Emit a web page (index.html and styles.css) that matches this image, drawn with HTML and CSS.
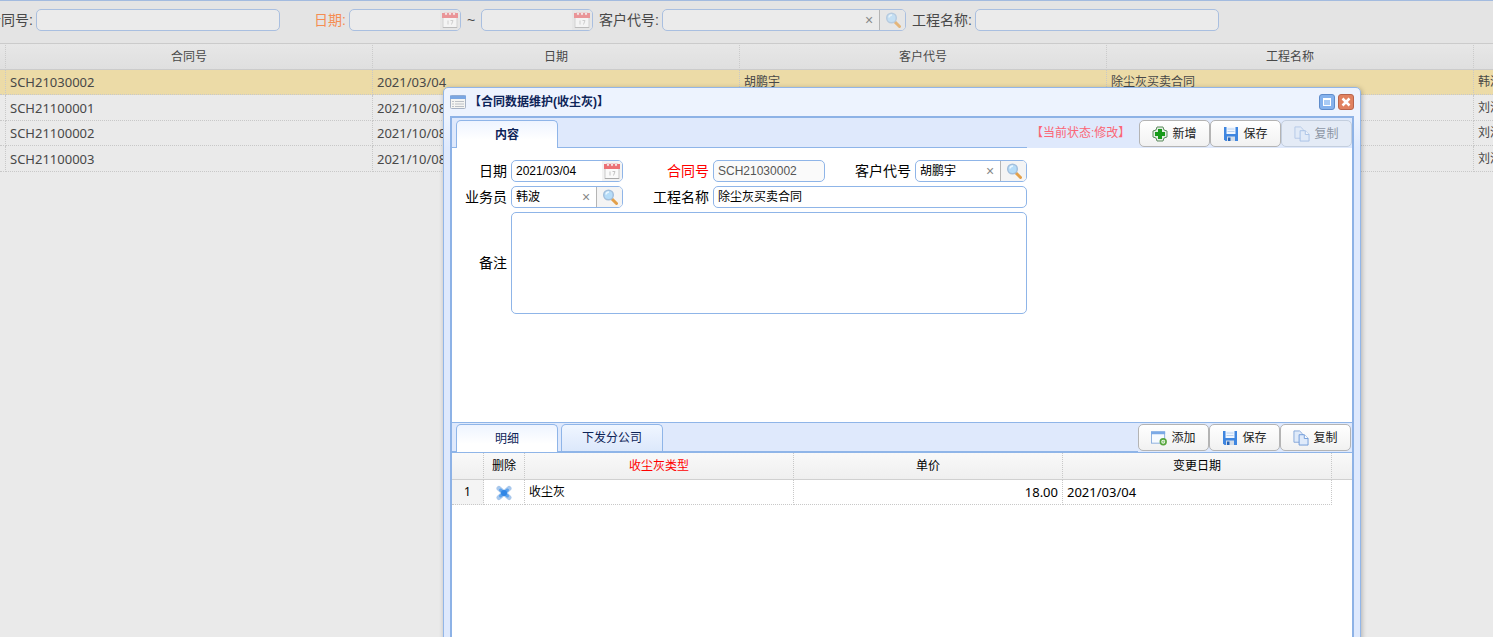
FILE: index.html
```
<!DOCTYPE html>
<html lang="zh-CN">
<head>
  <meta charset="UTF-8">
  <meta name="viewport" content="width=device-width, initial-scale=1.0">
  <title>合同数据维护</title>
  <link rel="stylesheet" href="styles.css">
</head>
<body>
  <svg class="sprite" aria-hidden="true">
    <symbol id="i-calendar" viewBox="0 0 16 16">
      <rect x="1" y="2" width="14" height="13.500" fill="#fafafa" stroke="#c9c9c9"/>
      <path d="M1 15h14v1H1z" fill="#aaa"/>
      <path d="M0 1h16v5H0z" fill="#ec7175"/>
      <path d="M3 0h2v3H3zM7 0h2v3H7zM11 0h2v3h-2z" fill="#fff" stroke="#e08a8c" stroke-width=".5"/>
      <path d="M6 8.500v4M8.500 8.500H11L9.500 12.500" fill="none" stroke="#c4c4c4"/>
    </symbol>
    <symbol id="i-search" viewBox="0 0 16 16">
      <path d="M10 10l4.500 4.500" stroke="#e3a04a" stroke-width="3" stroke-linecap="round"/>
      <circle cx="6.500" cy="6" r="4.800" fill="#b5dcf8" stroke="#a3bfdc" stroke-width="1.500"/>
      <path d="M4 5.500a3 3 0 0 1 3-2.500" stroke="#e9f6ff" stroke-width="1.500" fill="none"/>
    </symbol>
    <symbol id="i-window" viewBox="0 0 16 16">
      <rect x=".5" y="1.500" width="15" height="13" rx="1" fill="#f5f5f2" stroke="#a7b2c4"/>
      <path d="M0 1.500h16V5H0z" fill="#7ba7e3"/>
      <path d="M2 7.500h2M2 10h2M2 12.500h2M5 7.500h9M5 10h9M5 12.500h9" stroke="#bcc0c6"/>
    </symbol>
    <symbol id="i-plus" viewBox="0 0 16 16">
      <path d="M5 1h6l1 3 3 1v6l-3 1-1 3H5l-1-3-3-1V5l3-1z" fill="#e2eee2" stroke="#5d8b5f" stroke-linejoin="round"/>
      <path d="M6 3h4v3h3v4h-3v3H6v-3H3V6h3z" fill="#159a18"/>
    </symbol>
    <symbol id="i-save" viewBox="0 0 16 16">
      <path d="M1 1h14v14H2.500L1 13.500z" fill="#3f86e0"/>
      <path d="M3.500 1h9v7h-9z" fill="#f1f7ff"/>
      <path d="M4.500 3h7M4.500 5.500h7" stroke="#b8d0ef"/>
      <path d="M4 10.500h8V15H4z" fill="#d4dde8"/>
      <path d="M5 11.500h2.500V15H5z" fill="#2764b8"/>
    </symbol>
    <symbol id="i-copy" viewBox="0 0 17 16">
      <path d="M1 .5h6l3 3v9H1z" fill="#dfeaf9" stroke="#86a8da"/>
      <path d="M6.500 4.500H12l4 4v7H6.500z" fill="#dfeafa" stroke="#6f9ad9"/>
      <path d="M12 4.500v4h4" fill="#fff" stroke="#6f9ad9"/>
    </symbol>
    <symbol id="i-add" viewBox="0 0 17 16">
      <rect x=".5" y="1.500" width="14" height="12" fill="#f6faff" stroke="#8aaedd"/>
      <path d="M0 1h15v3H0z" fill="#7ba9e6"/>
      <circle cx="13" cy="12" r="3" fill="#fff" stroke="#57a63d" stroke-width="1.800"/>
      <path d="M13 10.500v3M11.500 12h3" stroke="#8cc878"/>
    </symbol>
    <symbol id="i-remove" viewBox="0 0 16 16">
      <path d="M3 3.500l10 9M13 3.500l-10 9" stroke="#a9c8ec" stroke-width="5" stroke-linecap="round"/>
      <path d="M4.500 5l7 6M11.500 5l-7 6" stroke="#5ba3ee" stroke-width="3" stroke-linecap="round"/>
      <circle cx="8" cy="8" r="3" fill="#2f86e6"/>
    </symbol>
  </svg>

  <main class="page">
    <form class="search-bar">
      <label class="first" for="q_no">合同号:</label>
      <div class="box wide"><input type="text" id="q_no"></div>
      <label class="orange" for="q_from">日期:</label>
      <div class="box date"><input type="text" id="q_from"><button type="button" class="pick" aria-label="选择日期"><svg><use href="#i-calendar"/></svg></button></div>
      <span class="to">~</span>
      <div class="box date"><input type="text" id="q_to" aria-label="结束日期"><button type="button" class="pick" aria-label="选择日期"><svg><use href="#i-calendar"/></svg></button></div>
      <label for="q_cust">客户代号:</label>
      <div class="box wide"><input type="text" id="q_cust"><button type="button" class="clear">×</button><button type="button" class="find" aria-label="查找"><svg><use href="#i-search"/></svg></button></div>
      <label for="q_name">工程名称:</label>
      <div class="box wide"><input type="text" id="q_name"></div>
    </form>

    <table class="grid list">
      <colgroup><col class="c-edge"><col><col><col><col><col></colgroup>
      <thead>
        <tr><th></th><th>合同号</th><th>日期</th><th>客户代号</th><th>工程名称</th><th></th></tr>
      </thead>
      <tbody>
        <tr class="selected"><td></td><td class="num">SCH21030002</td><td class="num">2021/03/04</td><td>胡鹏宇</td><td>除尘灰买卖合同</td><td>韩波</td></tr>
        <tr><td></td><td class="num">SCH21100001</td><td class="num">2021/10/08</td><td></td><td></td><td>刘洋</td></tr>
        <tr><td></td><td class="num">SCH21100002</td><td class="num">2021/10/08</td><td></td><td></td><td>刘洋</td></tr>
        <tr><td></td><td class="num">SCH21100003</td><td class="num">2021/10/08</td><td></td><td></td><td>刘洋</td></tr>
      </tbody>
    </table>
  </main>

  <section class="window" role="dialog" aria-labelledby="win_title">
    <header class="window-head">
      <svg><use href="#i-window"/></svg>
      <h1 id="win_title">【合同数据维护(收尘灰)】</h1>
      <button type="button" class="tool max" aria-label="最大化"><svg viewBox="0 0 16 16"><rect x="4.500" y="4.500" width="7" height="7" fill="#a9cbf5" stroke="#fff"/><path d="M4 4h8v2H4z" fill="#fff"/></svg></button>
      <button type="button" class="tool close" aria-label="关闭"><svg viewBox="0 0 16 16"><path d="M4.500 4.500l7 7M11.500 4.500l-7 7" stroke="#fff" stroke-width="2.500"/></svg></button>
    </header>

    <div class="window-body">
      <div class="strip">
        <div class="tabs"><button type="button" class="tab active bold">内容</button></div>
        <div class="actions">
          <span class="status">【当前状态:修改】</span>
          <button type="button" class="btn"><svg><use href="#i-plus"/></svg>新增</button>
          <button type="button" class="btn"><svg><use href="#i-save"/></svg>保存</button>
          <button type="button" class="btn" disabled><svg><use href="#i-copy"/></svg>复制</button>
        </div>
      </div>

      <form class="detail">
        <label for="f_date">日期</label>
        <div class="box"><input type="text" id="f_date" value="2021/03/04"><button type="button" class="pick" aria-label="选择日期"><svg><use href="#i-calendar"/></svg></button></div>
        <label class="required" for="f_no">合同号</label>
        <div class="box readonly"><input type="text" id="f_no" value="SCH21030002" readonly></div>
        <label for="f_cust">客户代号</label>
        <div class="box"><input type="text" id="f_cust" value="胡鹏宇"><button type="button" class="clear">×</button><button type="button" class="find" aria-label="查找"><svg><use href="#i-search"/></svg></button></div>

        <label for="f_sales">业务员</label>
        <div class="box"><input type="text" id="f_sales" value="韩波"><button type="button" class="clear">×</button><button type="button" class="find" aria-label="查找"><svg><use href="#i-search"/></svg></button></div>
        <label for="f_name">工程名称</label>
        <div class="box span3"><input type="text" id="f_name" value="除尘灰买卖合同"></div>

        <label for="f_memo">备注</label>
        <textarea class="span5" id="f_memo"></textarea>
      </form>

      <div class="strip lower">
        <div class="tabs">
          <button type="button" class="tab active">明细</button>
          <button type="button" class="tab">下发分公司</button>
        </div>
        <div class="actions">
          <button type="button" class="btn"><svg><use href="#i-add"/></svg>添加</button>
          <button type="button" class="btn"><svg><use href="#i-save"/></svg>保存</button>
          <button type="button" class="btn"><svg><use href="#i-copy"/></svg>复制</button>
        </div>
      </div>

      <table class="grid items">
        <colgroup><col class="c-index"><col class="c-del"><col><col><col><col class="c-rest"></colgroup>
        <thead>
          <tr><th></th><th>删除</th><th class="required">收尘灰类型</th><th>单价</th><th>变更日期</th><th></th></tr>
        </thead>
        <tbody>
          <tr>
            <td class="index">1</td>
            <td class="del"><button type="button" aria-label="删除"><svg><use href="#i-remove"/></svg></button></td>
            <td>收尘灰</td>
            <td class="num right">18.00</td>
            <td class="num">2021/03/04</td>
            <td class="rest"></td>
          </tr>
        </tbody>
      </table>
    </div>
  </section>
</body>
</html>
```
FILE: styles.css
```
* { box-sizing: border-box; }
html, body { height: 100%; }
body { margin: 0; position: relative; overflow: hidden; background: #eaeaea; font: 12px/16px "Liberation Sans", "Noto Sans CJK SC", sans-serif; color: #000; }
button, input, textarea { font: inherit; color: inherit; margin: 0; }
button { padding: 0; border: 0; background: none; cursor: pointer; }
svg { display: block; width: 16px; height: 16px; flex: none; }
.sprite { position: absolute; width: 0; height: 0; }
label { font-size: 14px; line-height: 22px; text-align: right; white-space: nowrap; }

/* text boxes */
.box { display: flex; height: 22px; border: 1px solid #8fb5e8; border-radius: 5px; background: #fff; overflow: hidden; }
.box input { flex: 1; min-width: 0; padding: 0 4px; border: 0; outline: 0; background: none; }
.box.readonly { background: #fafafa; color: #555; }
.pick { display: flex; align-items: center; justify-content: center; width: 20px; background: #f3f3f3; }
.clear { width: 20px; color: #888; font-size: 14px; }
.find { display: flex; align-items: center; justify-content: center; width: 26px; border-left: 1px solid #b5b5b5; background: #f4f4f4; }

/* list page */
.page { overflow: hidden; color: #484848; }
.search-bar { display: flex; align-items: flex-start; gap: 3px; height: 43px; padding-top: 8px; border-top: 1px solid #a3bbdf; background: #e4e4e4; }
.search-bar label { flex: none; width: 63px; }
.search-bar label.first { width: 46px; margin-left: -13px; }
.search-bar .orange { color: #f58d52; }
.search-bar .box { flex: none; border-color: #a9bfe0; background: #ebebeb; }
.search-bar .date { width: 112px; }
.search-bar .wide { width: 244px; }
.search-bar .pick, .search-bar .find { background: #e6e6e6; }
.search-bar svg { opacity: 0.7; }
.to { width: 14px; font-size: 14px; line-height: 22px; text-align: center; }

.grid { border-collapse: separate; border-spacing: 0; table-layout: fixed; }
.grid th, .grid td { height: 25px; padding: 0 4px; border: 0 dotted #c8c8c8; border-width: 0 1px 1px 0; overflow: hidden; white-space: nowrap; text-align: left; }
.grid th { height: 27px; border-top: 1px solid #d4d4d4; border-bottom: 1px solid #d0d0d0; font-weight: normal; text-align: center; background: linear-gradient(#f9f9f9, #efefef); }
.grid .num { font-family: "Noto Sans", sans-serif; font-size: 13px; }
.grid .right { text-align: right; }
.list { width: 1841px; }
.list .c-edge { width: 6px; }
.list th:first-child, .list td:first-child { padding: 0; }
.list th { border-color: #cbcbcb; background: linear-gradient(#e7e7e7, #dfdfdf); }
.list tr:nth-child(even) td { height: 26px; }
.list .selected td { background: #ecdba7; }

/* edit window */
.window { position: absolute; left: 443px; top: 87px; bottom: -10px; width: 918px; display: flex; flex-direction: column; padding: 0 6px; border: 1px solid #92b6e8; border-radius: 5px; background: linear-gradient(#edf3fe 30px, #dee9fd 60px); box-shadow: 1px 1px 5px rgba(0,0,0,0.25); }
.window-head { display: flex; align-items: center; gap: 3px; height: 28px; }
.window-head h1 { flex: 1; margin: 0; font-size: 12px; color: #0d2458; }
.window-head .tool { display: flex; align-items: center; justify-content: center; width: 16px; height: 16px; border: 1px solid #5f8ccb; border-radius: 3px; background: #85b2ed; }
.window-head .close { border-color: #b8644c; background: #e18260; }
.window-body { flex: 1; border: 2px solid #8db2e6; background: #fff; }

.strip { display: flex; justify-content: space-between; height: 30px; background: #dfe9fc; }
.tabs { flex: 1; display: flex; align-items: flex-end; gap: 3px; padding-left: 4px; border-bottom: 1px solid #8fb5e8; }
.tab { width: 102px; height: 27px; border: 1px solid #8fb5e8; border-bottom: 0; border-radius: 5px 5px 0 0; color: #0d2458; background: linear-gradient(#f0f6ff, #dce8fb); }
.tab.active { height: 28px; margin-bottom: -1px; background: linear-gradient(#eef4ff, #fff 70%); }
.tab.bold { font-weight: bold; }
.actions { display: flex; align-items: flex-start; padding-top: 2px; }
.status { width: 112px; padding-left: 4px; line-height: 26px; white-space: nowrap; color: #fb6676; }
.btn { display: flex; align-items: center; justify-content: center; gap: 4px; width: 71px; height: 27px; border: 1px solid #b4b4b4; border-radius: 5px; color: #222; background: linear-gradient(#fff, #f1f1f1); }
.btn:disabled { border-color: #c3cede; color: #8d96a5; background: #e4ebf6; cursor: default; }
.btn:disabled svg { opacity: 0.5; }

.detail { display: grid; grid-template-columns: 54px 112px 82px 112px 82px 112px; gap: 4px; align-items: center; align-content: start; height: 274px; padding: 12px 0 0 1px; }
.required { color: #f00; }
.span3 { grid-column: span 3; }
.span5 { grid-column: span 5; }
.detail textarea { width: 100%; height: 102px; padding: 4px; border: 1px solid #8fb5e8; border-radius: 5px; resize: none; outline: 0; }

.lower { height: 31px; border-top: 1px solid #8fb5e8; border-bottom: 1px solid #8fb5e8; }
.lower .actions { padding: 1px 1px 0 0; }
.items { width: 100%; }
.items .c-index { width: 32px; }
.items .c-del { width: 41px; }
.items .c-rest { width: 20px; }
.items th { border-top: 0; }
.items .index { padding: 0; text-align: center; font-family: "Noto Sans", sans-serif; background: #f4f4f4; }
.items .del button { display: block; margin: 2px auto 0; }
.items .rest { border: 0; }
.items th:last-child { border-right: 0; }
```
